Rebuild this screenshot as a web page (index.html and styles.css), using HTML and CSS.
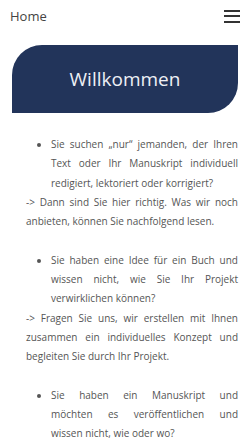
FILE: index.html
```html
<!DOCTYPE html>
<html lang="de">
<head>
    <meta charset="UTF-8">
    <meta name="viewport" content="width=device-width, initial-scale=1.0">
    <title>Home</title>
    <link rel="stylesheet" href="styles.css">
</head>
<body>

<div class="kopf">
    <span class="kopf-titel">Home</span>
    <span class="menu-btn">
        <span></span>
        <span></span>
        <span></span>
    </span>
</div>

<div class="seite">
    <div class="banner">
        <h1>Willkommen</h1>
    </div>

    <div class="inhalt">
        <ul>
            <li>Sie suchen „nur“ jemanden, der Ihren Text oder Ihr Manuskript individuell redigiert, lektoriert oder korrigiert?</li>
        </ul>
        <p>-&gt; Dann sind Sie hier richtig. Was wir noch anbieten, können Sie nachfolgend lesen.</p>

        <ul>
            <li>Sie haben eine Idee für ein Buch und wissen nicht, wie Sie Ihr Projekt verwirklichen können?</li>
        </ul>
        <p>-&gt; Fragen Sie uns, wir erstellen mit Ihnen zusammen ein individuelles Konzept und begleiten Sie durch Ihr Projekt.</p>

        <ul>
            <li>Sie haben ein Manuskript und möchten&nbsp;es veröffentlichen und wissen&nbsp;nicht, wie oder wo?</li>
        </ul>
    </div>
</div>

</body>
</html>
```

FILE: styles.css
```css
body {
    margin: 0;
    font-family: "Open Sans", Arial, sans-serif;
    color: #555;
    background-color: #fff;
}
.kopf {
    display: flex;
    justify-content: space-between;
    align-items: center;
    height: 32px;
    padding: 0 10px;
}
.kopf-titel {
    font-size: 13px;
    color: #444;
}
.menu-btn {
    display: flex;
    flex-direction: column;
    gap: 3.5px;
    width: 16px;
}
.menu-btn span {
    display: block;
    height: 2px;
    background-color: #333;
}
.seite {
    padding: 13px 12px 0 12px;
}
.banner {
    background-color: #22345a;
    height: 68px;
    border-radius: 30px 0 30px 0;
    display: flex;
    align-items: center;
    justify-content: center;
}
.banner h1 {
    margin: 0;
    font-size: 19px;
    font-weight: 400;
    color: #eef0f5;
}
.inhalt {
    padding: 22px 0 0 14px;
    font-size: 10px;
    line-height: 19.3px;
    text-align: justify;
}
.inhalt ul {
    margin: 0;
    padding-left: 25px;
}
.inhalt p {
    margin: 0 0 19.3px 0;
}
```
